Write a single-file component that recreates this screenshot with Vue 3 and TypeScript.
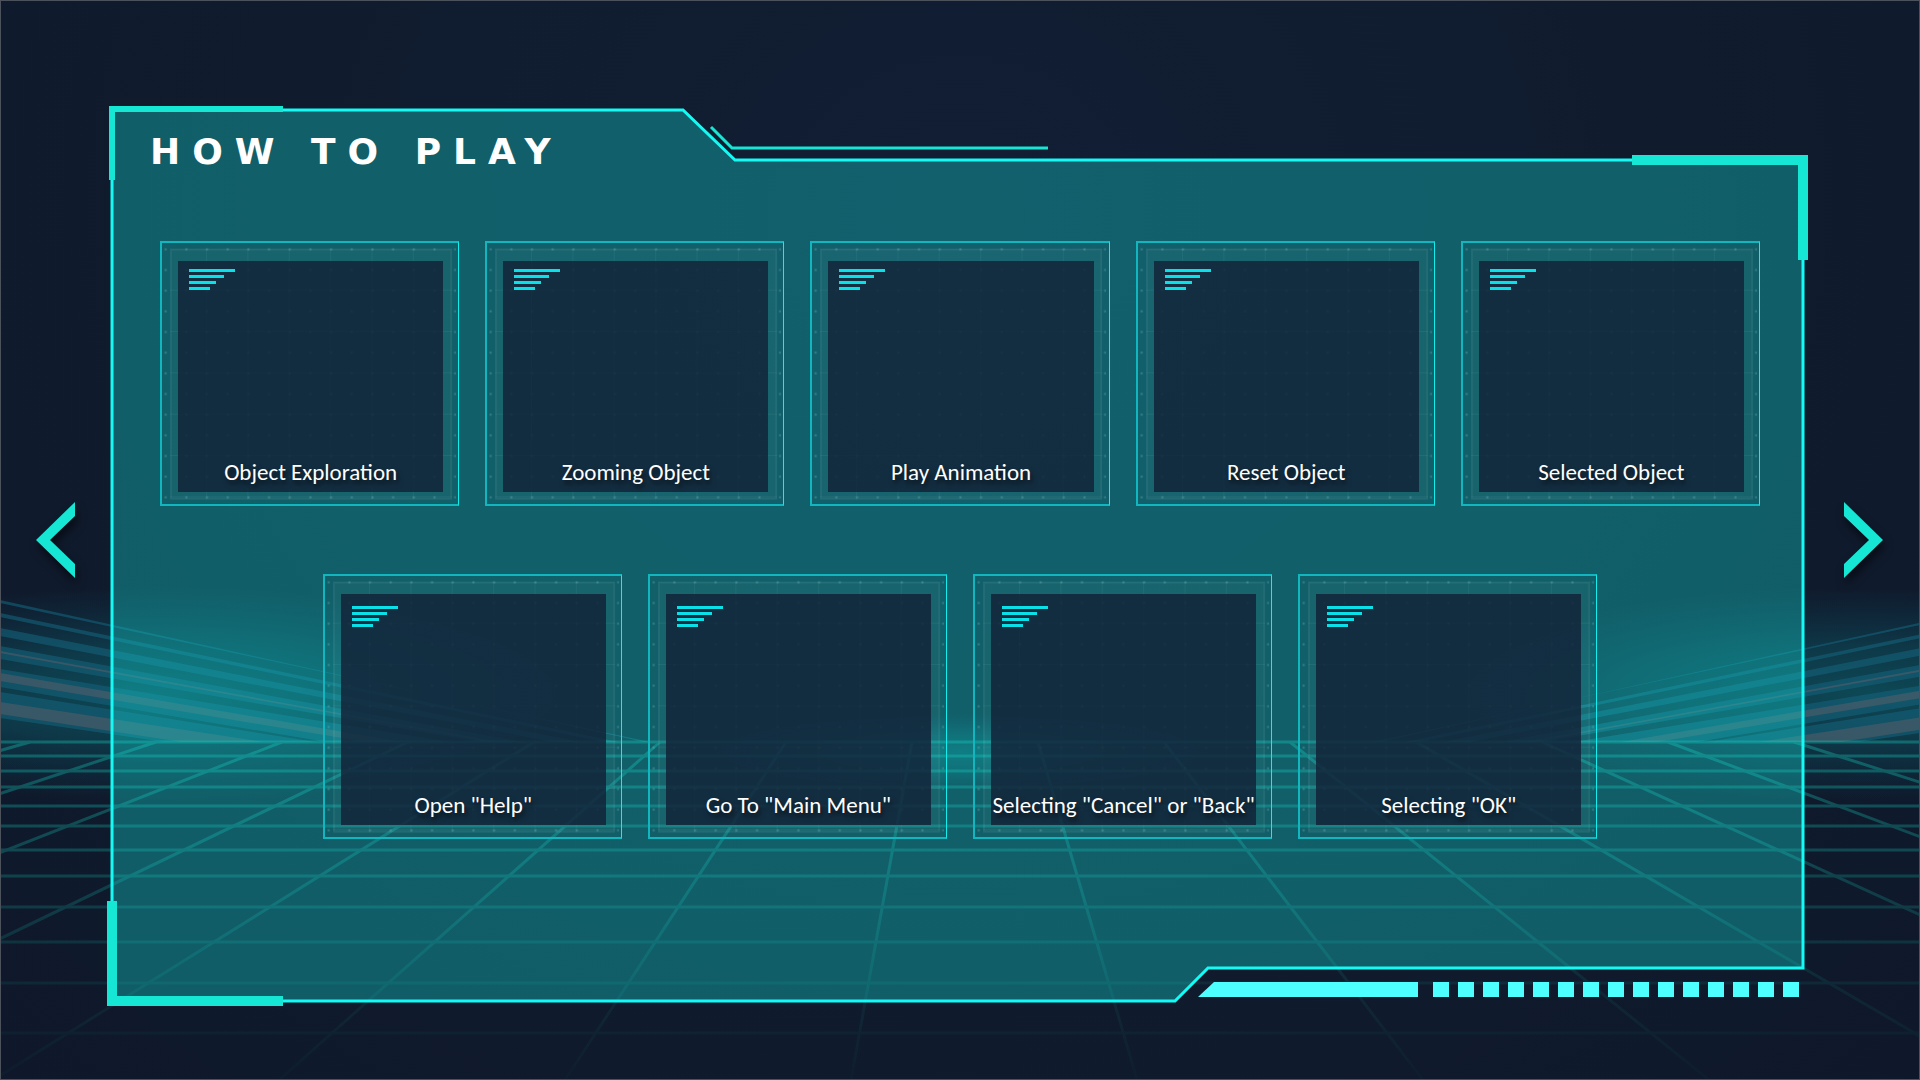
<script setup lang="ts">
interface Row {
  name: string
  labels: string[]
}

const rows: Row[] = [
  {
    name: 'objects',
    labels: ['Object Exploration', 'Zooming Object', 'Play Animation', 'Reset Object', 'Selected Object'],
  },
  {
    name: 'menus',
    labels: ['Open "Help"', 'Go To "Main Menu"', 'Selecting "Cancel" or "Back"', 'Selecting "OK"'],
  },
]

const horizon = 742
const floorLines: number[] = [742, 756, 771, 787, 806, 826, 850, 876, 907, 942, 983, 1033]

// Rays of the floor grid, fanning out from a vanishing point above the horizon
const floorRays = Array.from({ length: 17 }, (_, i) => {
  const top = 30 + 126 * i
  return { top, bottom: 960 + (top - 960) * 2.27 }
})

const blueBeams: string[] = [
  '0,600 0,603 650,742 644,742',
  '0,613 0,617 604,742 618,742',
  '0,628 0,636 554,742 580,742',
  '0,646 0,659 480,742 522,742',
  '0,669 0,687 326,742 450,742',
  '0,692 0,718 165,742 316,742',
]
const greyBeams: string[] = [
  '0,651 0,653 490,742 498,742',
  '0,673 0,681 366,742 402,742',
  '0,702 0,714 182,742 264,742',
]

const blocks = Array.from({ length: 15 }, (_, i) => 1433 + 25 * i)
</script>

<template>
  <main class="stage">
    <svg class="scene" viewBox="0 0 1920 1080" preserveAspectRatio="none" aria-hidden="true">
      <defs>
        <radialGradient id="glow">
          <stop offset="0" stop-color="#0c6a74" stop-opacity="0.58" />
          <stop offset="0.45" stop-color="#0c6470" stop-opacity="0.4" />
          <stop offset="1" stop-color="#0c5468" stop-opacity="0" />
        </radialGradient>
        <linearGradient id="fade" x1="0" y1="0" x2="0" y2="1">
          <stop offset="0" stop-color="#fff" stop-opacity="0.36" />
          <stop offset="0.35" stop-color="#fff" stop-opacity="0.26" />
          <stop offset="0.75" stop-color="#fff" stop-opacity="0.08" />
          <stop offset="1" stop-color="#fff" stop-opacity="0.02" />
        </linearGradient>
        <mask id="floor-mask" maskUnits="userSpaceOnUse" x="0" y="738" width="1920" height="342">
          <rect x="0" y="738" width="1920" height="342" fill="url(#fade)" />
        </mask>
        <g id="beams">
          <polygon v-for="p in blueBeams" :key="p" :points="p" fill="#14607a" fill-opacity="0.6" />
          <polygon v-for="p in greyBeams" :key="p" :points="p" fill="#665f68" fill-opacity="0.46" />
        </g>
        <pattern id="dots" x="-14" y="-6" width="62" height="62" patternUnits="userSpaceOnUse">
          <rect x="28" y="28" width="6" height="6" fill="#8fd0d2" fill-opacity="0.3" />
        </pattern>
        <pattern id="rules" x="17" y="25" width="124" height="124" patternUnits="userSpaceOnUse">
          <path d="M0 124H124M124 0V124" stroke="#8fd0d2" stroke-opacity="0.2" stroke-width="4" fill="none" />
        </pattern>
      </defs>
      <ellipse cx="150" cy="694" rx="440" ry="108" fill="url(#glow)" />
      <ellipse cx="1873" cy="694" rx="440" ry="108" fill="url(#glow)" />
      <ellipse cx="960" cy="752" rx="260" ry="38" fill="url(#glow)" />
      <use href="#beams" />
      <use href="#beams" transform="translate(2023 0) scale(-1 1)" />
      <g mask="url(#floor-mask)" stroke="#18c8b8" stroke-width="3">
        <line v-for="y in floorLines" :key="y" x1="0" :y1="y" x2="1920" :y2="y" />
        <line v-for="r in floorRays" :key="r.top" :x1="r.top" :y1="horizon" :x2="r.bottom" y2="1080" />
      </g>
    </svg>

    <button class="arrow" type="button" aria-label="Previous page">
      <svg viewBox="0 0 39 76" width="39" height="76" aria-hidden="true">
        <polygon points="0,38 39,0 39,14 14,38 39,62 39,76" fill="#16e6d4" />
      </svg>
    </button>

    <section class="panel">
      <svg class="frame" viewBox="107 106 1701 901" preserveAspectRatio="none" aria-hidden="true">
        <path
          d="M112 110H683L735 160H1803V968H1208L1175 1001H112Z"
          fill="#14ded6"
          fill-opacity="0.35"
          stroke="#14fbf5"
          stroke-width="3"
        />
        <path d="M711 127L732 148H1048" fill="none" stroke="#16e6d4" stroke-width="3" />
        <path
          d="M109 106H283V112H115V180H109ZM1632 155H1808V260H1798V165H1632ZM107 901H117V996H283V1006H107Z"
          fill="#16e6d4"
        />
        <path d="M1214 982H1418V997H1198Z" fill="#4dffff" />
        <rect v-for="x in blocks" :key="x" :x="x" y="982" width="16" height="15" fill="#4dffff" />
      </svg>

      <h1 class="title">HOW TO PLAY</h1>

      <div class="rows">
        <ul v-for="row in rows" :key="row.name" class="row" :class="row.name">
          <li v-for="label in row.labels" :key="label" class="card">
            <svg class="grid" viewBox="0 0 897 795" preserveAspectRatio="none" aria-hidden="true">
              <rect x="30" y="23" width="846" height="753" fill="#fff" fill-opacity="0.03" />
              <rect x="33" y="26" width="840" height="747" fill="none" stroke="#fff" stroke-opacity="0.05" stroke-width="6" />
              <rect x="30" y="23" width="846" height="753" fill="url(#rules)" fill-opacity="0.5" />
              <rect x="8" y="14" width="880" height="770" fill="url(#dots)" />
            </svg>
            <div class="screen">
              <svg class="mark" viewBox="0 0 46 21" width="46" height="21" aria-hidden="true">
                <path d="M0 0H46V3H0ZM0 6H35V9H0ZM0 12H27V15H0ZM0 18H21V21H0Z" fill="#0ae0e8" />
              </svg>
              <span class="label">{{ label }}</span>
            </div>
          </li>
        </ul>
      </div>
    </section>

    <button class="arrow" type="button" aria-label="Next page">
      <svg viewBox="0 0 39 76" width="39" height="76" aria-hidden="true">
        <polygon points="39,38 0,0 0,14 25,38 0,62 0,76" fill="#16e6d4" />
      </svg>
    </button>
  </main>
</template>

<style>
body {
  margin: 0;
  background: #0f1a2c;
}
</style>

<style scoped>
.stage {
  position: relative;
  display: grid;
  grid-template-columns: 107px minmax(0, 1fr) 112px;
  min-height: 100vh;
  overflow: hidden;
  background: radial-gradient(ellipse at 50% 20%, #111e34 0%, #101c2e 50%, #0e182a 100%);
  color: #fff;
  font-family: Carlito, Lato, "Noto Sans", sans-serif;
}

.stage::after {
  content: "";
  position: absolute;
  inset: 0;
  border: 1px solid #4b525c;
  pointer-events: none;
}

.scene,
.frame,
.grid {
  position: absolute;
  inset: 0;
  width: 100%;
  height: 100%;
}

.arrow {
  position: relative;
  align-self: center;
  justify-self: start;
  margin: 0 0 0 36px;
  padding: 0;
  border: 0;
  background: none;
  cursor: pointer;
}

.arrow svg {
  display: block;
  filter: drop-shadow(2px 6px 5px rgba(0, 0, 0, 0.55));
}

.panel {
  position: relative;
  margin: 106px 0 73px;
  padding: 0 48px 168px 53px;
}

.title {
  position: relative;
  display: flex;
  align-items: center;
  height: 91px;
  margin: 0 0 44px -10px;
  font-family: "DejaVu Sans", sans-serif;
  font-size: 36px;
  line-height: 42px;
  font-weight: 700;
  letter-spacing: 12px;
  white-space: nowrap;
}

.rows {
  position: relative;
  display: flex;
  flex-direction: column;
  gap: 68px;
}

.row {
  display: flex;
  justify-content: center;
  gap: 26px;
  margin: 0;
  padding: 0;
  list-style: none;
}

.card {
  position: relative;
  box-sizing: border-box;
  flex: 0 1 calc((100% - 104px) / 5);
  min-width: 0;
  height: 265px;
  padding: 18px 15px 12px 16px;
  border: 2px solid #11b6be;
  border-right: 1px solid #12eeee;
}

.grid {
  inset: -2px -1px -2px -2px;
  width: calc(100% + 3px);
  height: calc(100% + 4px);
}

.screen {
  position: relative;
  display: flex;
  flex-direction: column;
  justify-content: space-between;
  box-sizing: border-box;
  height: 100%;
  padding: 8px 0;
  background: rgba(18, 34, 55, 0.83);
}

.menus .screen {
  padding-top: 12px;
}

.mark {
  display: block;
  flex: none;
  margin-left: 11px;
}

.label {
  font-size: 23px;
  line-height: 24px;
  text-align: center;
  white-space: nowrap;
  text-shadow: 2px 4px 5px rgba(0, 0, 0, 0.6);
}
</style>
